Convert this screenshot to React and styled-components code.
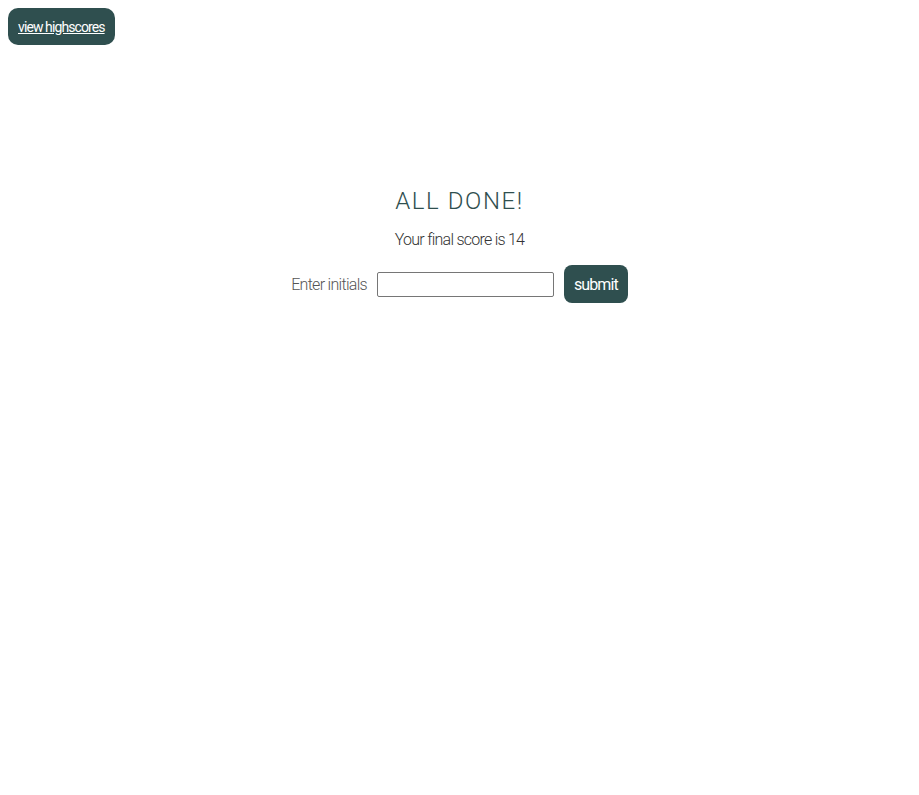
import React from "react";
import styled, { createGlobalStyle } from "styled-components";

const Global = createGlobalStyle`
  body {
    margin: 8px;
    font-family: "Roboto", "Liberation Sans", sans-serif;
    font-weight: 300;
    background: #fff;
    color: #2f3a3a;
  }
`;

const Header = styled.header`
  display: flex;
`;

const LinkButton = styled.a`
  display: inline-flex;
  align-items: center;
  height: 37px;
  padding: 0 10px;
  background: #2f4f4f;
  color: #fff;
  border-radius: 10px;
  font-size: 14px;
  font-weight: 400;
  letter-spacing: -0.9px;
  text-decoration: underline;
  cursor: pointer;
`;

const Main = styled.main`
  display: flex;
  flex-direction: column;
  align-items: center;
  padding-top: 142px;
`;

const Title = styled.h1`
  margin: 0;
  font-size: 24px;
  font-weight: 300;
  letter-spacing: 1.6px;
  color: #2f4f4f;
`;

const Score = styled.p`
  margin: 15px 0 0;
  font-size: 16px;
  letter-spacing: -0.75px;
  color: #333;
`;

const Form = styled.form`
  margin-top: 16px;
  display: flex;
  align-items: center;
  gap: 10px;
`;

const Label = styled.label`
  font-size: 16px;
  letter-spacing: -0.7px;
  color: #555;
`;

const Input = styled.input`
  width: 171px;
  height: 19px;
  border: 1px solid #767676;
  border-radius: 2px;
  padding: 2px;
`;

const Submit = styled.button`
  height: 38px;
  padding: 0 10px;
  border: none;
  border-radius: 8px;
  background: #2f4f4f;
  color: #fff;
  font-family: inherit;
  font-size: 16px;
  font-weight: 400;
  letter-spacing: -0.9px;
`;

export default function App() {
  return (
    <>
      <Global />
      <Header>
        <LinkButton>view highscores</LinkButton>
      </Header>
      <Main>
        <Title>ALL DONE!</Title>
        <Score>Your final score is 14</Score>
        <Form onSubmit={(e) => e.preventDefault()}>
          <Label htmlFor="initials">Enter initials</Label>
          <Input id="initials" type="text" />
          <Submit type="submit">submit</Submit>
        </Form>
      </Main>
    </>
  );
}
